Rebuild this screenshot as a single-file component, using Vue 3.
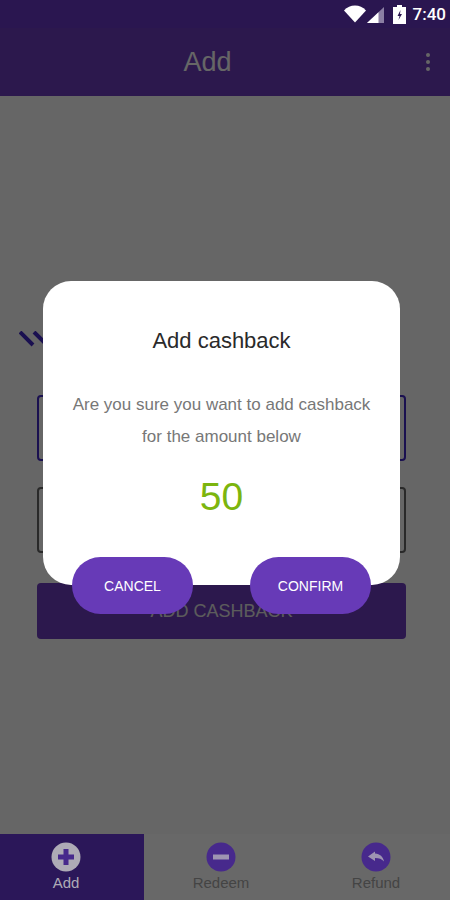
<template>
  <div class="screen">
    <div class="status-bar">
      <svg class="wifi" width="22" height="18" viewBox="0 0 22 18"><path d="M0 5.500C3 2.200 6.800 .5 11 .5s8 1.700 11 5L11 17.500z" fill="#fff"/></svg>
      <svg class="signal" width="17" height="16" viewBox="0 0 17 16"><path d="M17 0v16H0z" fill="#8b7fa3"/><path d="M11.500 5.200V16H0z" fill="#fff"/></svg>
      <svg class="battery" width="13" height="19" viewBox="0 0 13 19"><path d="M4 0h5v2h4v17H0V2h4z" fill="#fff"/><path d="M7.500 5 4.500 11h2l-1 4 3.500-6H7z" fill="#2a1650"/></svg>
      <span class="time">7:40</span>
    </div>

    <header class="app-bar">
      <span class="app-title">Add</span>
      <div class="menu-dots"><i></i><i></i><i></i></div>
    </header>

    <main class="content">
      <svg class="stripes" width="30" height="18" viewBox="0 0 30 18"><path d="M1 1l13 13M15 1l13 13" stroke="#4228c8" stroke-width="4" fill="none"/></svg>
      <div class="field field-active"></div>
      <div class="field"></div>
      <button class="add-btn">ADD CASHBACK</button>
    </main>

    <nav class="bottom-nav">
      <div v-for="tab in tabs" :key="tab.label" class="tab" :class="[tab.cls, { active: tab.active }]">
        <svg class="tab-icon" width="30" height="30" viewBox="0 0 30 30">
          <circle cx="15" cy="15" r="14.500" class="tab-circle" />
          <path :d="tab.icon" class="tab-glyph" />
        </svg>
        <span>{{ tab.label }}</span>
      </div>
    </nav>

    <div class="overlay">
      <div class="dialog">
        <h2>Add cashback</h2>
        <p>Are you sure you want to add cashback<br>for the amount below</p>
        <div class="amount">50</div>
        <div class="actions">
          <button>CANCEL</button>
          <button>CONFIRM</button>
        </div>
      </div>
    </div>
  </div>
</template>

<script setup>
const tabs = [
  { label: 'Add', active: true, cls: 'tab-add', icon: 'M12.500 7h5v5.500H23v5h-5.500V23h-5v-5.500H7v-5h5.500z' },
  { label: 'Redeem', active: false, cls: 'tab-redeem', icon: 'M7 12.500h16v5H7z' },
  { label: 'Refund', active: false, cls: 'tab-refund', icon: 'M14 9.500 7 14.500l7 4.500v-3c4 0 7 1 9 3.500-1-5-4-7.500-9-8z' }
]
</script>

<style>
html, body { margin: 0; background: #fff; }
</style>

<style scoped>
.screen {
  position: relative;
  width: 450px;
  height: 900px;
  display: flex;
  flex-direction: column;
  overflow: hidden;
  font-family: "Liberation Sans", Arial, sans-serif;
  background: #fff;
}

.status-bar {
  position: relative;
  z-index: 3;
  height: 28px;
  flex: none;
  display: flex;
  align-items: center;
  justify-content: flex-end;
  padding-right: 4px;
  box-sizing: border-box;
  background: #2a1650;
}
.wifi { margin-right: 1px; }
.signal { margin-right: 9px; margin-top: 2px; }
.battery { margin-right: 7px; margin-top: 1px; }
.time { color: #fff; font: 500 17px Roboto, sans-serif; }

.app-bar {
  position: relative;
  height: 68px;
  flex: none;
  display: flex;
  align-items: center;
  justify-content: center;
  padding-right: 35px;
  background: #6e3cc0;
}
.app-title {
  color: #fff;
  font-size: 27px;
}
.menu-dots {
  position: absolute;
  right: 20px;
  top: 25px;
  display: flex;
  flex-direction: column;
  gap: 3px;
}
.menu-dots i {
  width: 4px;
  height: 4px;
  border-radius: 50%;
  background: #fff;
}

.content {
  flex: 1;
  display: flex;
  flex-direction: column;
  padding: 0 44px 0 37px;
}
.stripes {
  margin: 235px 0 0 -18px;
  flex: none;
}
.field {
  height: 66px;
  flex: none;
  box-sizing: border-box;
  border: 2px solid #666;
  border-radius: 4px;
  margin-top: 26px;
}
.field-active {
  border-color: #4228c8;
  margin-top: 46px;
}
.add-btn {
  height: 56px;
  margin-top: 30px;
  border: 0;
  border-radius: 4px;
  background: #6e3cc0;
  color: #e6e6e6;
  font: 18px "Liberation Sans", Arial, sans-serif;
}

/* sits above the scrim, so the colours here are the dimmed ones */
.bottom-nav {
  position: relative;
  z-index: 3;
  height: 66px;
  flex: none;
  display: flex;
  background: #686868;
}
.tab {
  display: flex;
  flex-direction: column;
  align-items: center;
  padding-top: 8px;
  box-sizing: border-box;
  color: #444;
  font-size: 15px;
}
.tab span { margin-top: 2px; }
.tab-add { width: 144px; padding-right: 12px; }
.tab-redeem { width: 154px; }
.tab-refund { width: 152px; padding-left: 4px; }
.tab.active {
  background: #2b1759;
  color: #aeabb6;
}
.tab-circle { fill: #47298c; }
.tab-glyph { fill: #9e94b2; }
.tab.active .tab-circle { fill: #aeabb6; }
.tab.active .tab-glyph { fill: #47298c; }

.overlay {
  position: absolute;
  inset: 0;
  z-index: 2;
  background: rgba(0, 0, 0, 0.6);
  padding: 281px 0 0 43px;
  box-sizing: border-box;
}
.dialog {
  width: 357px;
  height: 304px;
  box-sizing: border-box;
  background: #fff;
  border-radius: 28px;
  padding-top: 47px;
  text-align: center;
}
.dialog h2 {
  margin: 0;
  font-size: 22px;
  line-height: 26px;
  font-weight: 400;
  color: #2a2a2a;
}
.dialog p {
  margin: 35px 0 0;
  font-size: 17px;
  line-height: 32px;
  color: #777;
}
.amount {
  margin-top: 21px;
  font-size: 39px;
  line-height: 46px;
  color: #7cb50e;
}
.actions {
  display: flex;
  justify-content: space-between;
  padding: 0 29px;
  margin-top: 37px;
}
.actions button {
  width: 121px;
  height: 57px;
  border: 0;
  border-radius: 29px;
  background: #673ab7;
  color: #fff;
  font: 14px "Liberation Sans", Arial, sans-serif;
}
</style>
